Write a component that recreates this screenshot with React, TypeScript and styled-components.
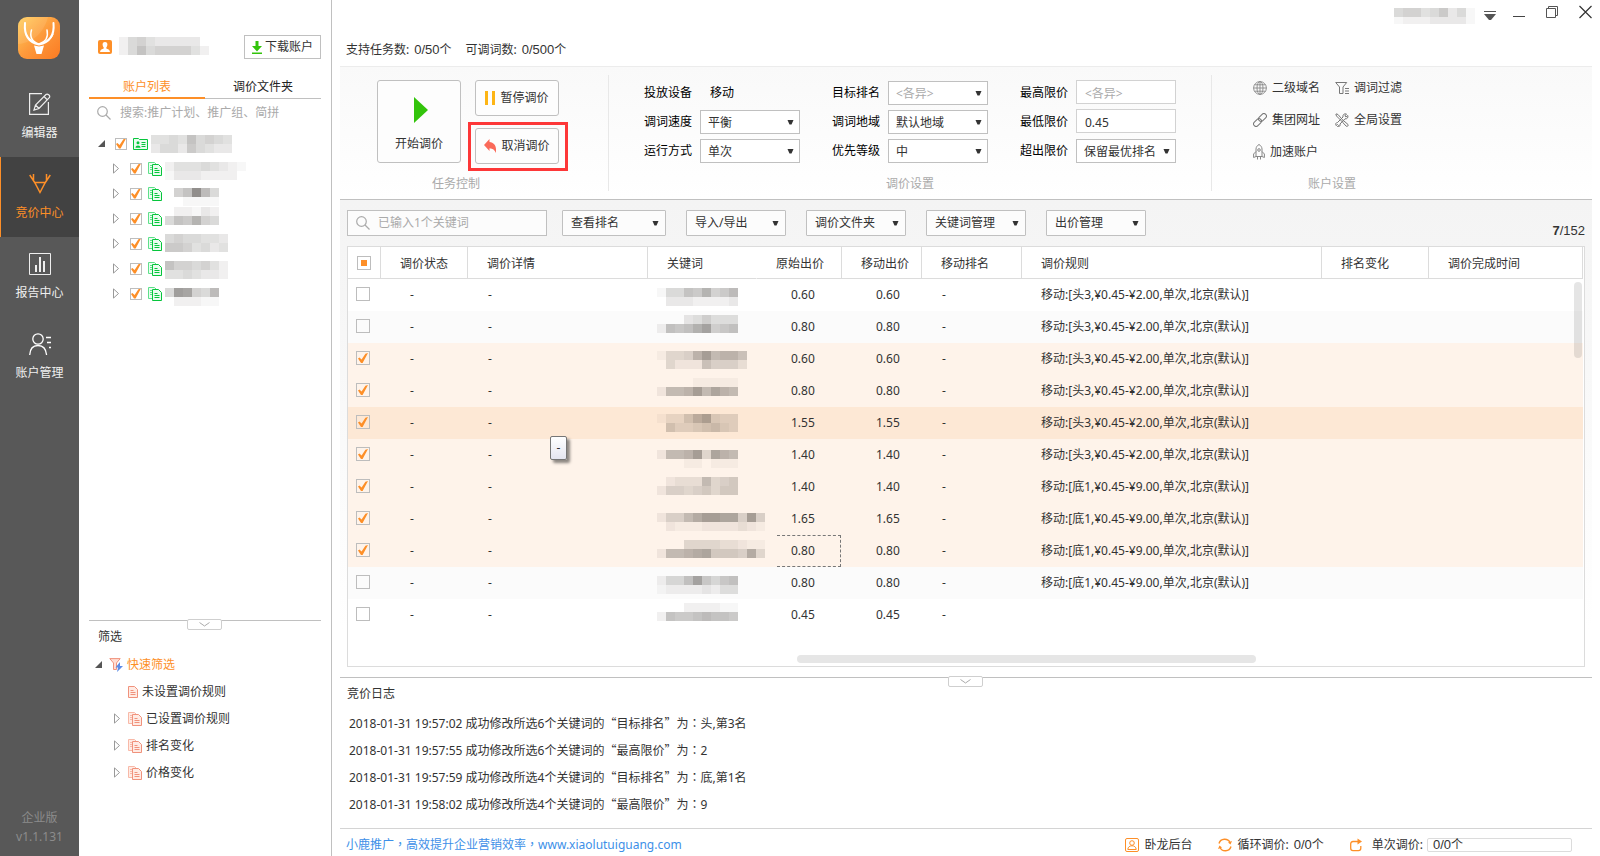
import React, { useEffect, useRef } from 'react';
import styled, { createGlobalStyle, css } from 'styled-components';

const orange = '#fd8f28';
const line = '#c0c0c0';
const softLine = '#dcdcdc';
const green = '#06c53c';

const GlobalStyle = createGlobalStyle`
  * { box-sizing: border-box; }
  body {
    margin: 0;
    background: #fff;
    color: #333;
    font: 12px/16px "Noto Sans", "Noto Sans CJK SC", sans-serif;
  }
  button, input, select { font: inherit; color: inherit; margin: 0; }
  button { background: none; border: 0; padding: 0; cursor: pointer; }
  a { color: inherit; text-decoration: none; }
  svg { display: block; flex: none; }
  ul { list-style: none; margin: 0; padding: 0; }
`;

/* ---------- shared pieces ---------- */

const Digits = styled.span`
  font-family: "Liberation Sans", sans-serif;
  font-size: 13px;
`;

const Amount = styled(Digits)`
  margin-left: 5px;
`;

const WideText = styled.span`
  font-family: "Noto Sans CJK TC", sans-serif;
  line-height: 0;
`;

/* Full-width punctuation, centred in its square. */
const Wide = ({ children }: { children: string }) => <WideText lang="zh-TW">{children}</WideText>;

const CheckInput = styled.input<{ $size: number }>`
  appearance: none;
  flex: none;
  width: ${(p) => p.$size}px;
  height: ${(p) => p.$size}px;
  border: 1px solid #bdbdbd;
  background: transparent;
  display: grid;
  place-items: center;
  &:checked::after {
    content: '';
    width: 10px;
    height: 10px;
    background: ${orange};
    clip-path: polygon(0 56%, 14% 46%, 36% 64%, 74% 8%, 100% 0, 46% 100%, 30% 100%);
  }
  &:indeterminate::after {
    content: '';
    width: 6px;
    height: 6px;
    background: ${orange};
    clip-path: none;
  }
`;

function MixedCheck({ label }: { label: string }) {
  const ref = useRef<HTMLInputElement>(null);
  useEffect(() => {
    if (ref.current) ref.current.indeterminate = true;
  }, []);
  return <CheckInput ref={ref} type="checkbox" $size={14} aria-label={label} />;
}

/* Pixelated privacy mask; each digit is the darkness of one 9px tile. */
function Mosaic({ tiles, top = 0, height }: { tiles: string[]; top?: number; height: number }) {
  const columns = Math.max(...tiles.map((t) => t.length));
  return (
    <svg width={columns * 9} height={height} shapeRendering="crispEdges" aria-hidden="true">
      {tiles.map((row, y) =>
        row.split('').map((c, x) => (
          <rect
            key={`${x}-${y}`}
            x={x * 9}
            y={top + y * 9}
            width={9}
            height={9}
            fill="#0a0500"
            opacity={parseInt(c, 16) * 0.03}
          />
        )),
      )}
    </svg>
  );
}

const Caret = () => (
  <svg width="7" height="5" viewBox="0 0 7 5">
    <path d="M0.5 0h6L4.5 4.500h-2z" fill="#333" />
  </svg>
);

const SearchIcon = () => (
  <svg width="14" height="14" viewBox="0 0 14 14" fill="none" stroke="#aaa" strokeWidth="1.2">
    <circle cx="5.500" cy="5.500" r="4.800" />
    <path d="M9 9l4.500 4.500" />
  </svg>
);

const Closed = () => (
  <svg width="7" height="11" viewBox="0 0 7 11" fill="none" stroke="#999">
    <path d="M.5.900v9.200l5-4.600z" />
  </svg>
);

const Opened = () => (
  <svg width="7" height="7" viewBox="0 0 7 7">
    <path d="M7 0v7H0z" fill="#555" />
  </svg>
);

const Pages = ({ color, back, fill }: { color: string; back: string; fill: string }) => (
  <svg width="14" height="14" viewBox="0 0 14 14" fill="none">
    <path d="M4 11.500H.5V.5h6l2 2" stroke={back} fill={fill} />
    <path d="M2 3.500h2M2 5.500h2M2 7.500h2" stroke={back} />
    <path d="M4.500 2.500h6l3 3v8h-9z" stroke={color} fill={fill} />
    <path d="M6.500 6.500h3M6.500 8.500h5M6.500 10.500h5" stroke={color} />
  </svg>
);

const Page = () => (
  <svg width="10" height="12" viewBox="0 0 10 12" fill="none" stroke="#f0927c">
    <path d="M.5.5h6l3 3v8h-9z" fill="#ffebe4" />
    <path d="M2.500 4.500h3M2.500 6.500h5M2.500 8.500h5" />
  </svg>
);

/* ---------- navigation rail ---------- */

const Shell = styled.div`
  display: flex;
  min-height: 100vh;
  padding-right: 8px;
`;

const Rail = styled.nav`
  flex: none;
  width: 79px;
  display: flex;
  flex-direction: column;
  background: #585858;
`;

const Logo = styled.div`
  height: 77px;
  padding: 17px 18px;
`;

const RailItem = styled.a<{ $active?: boolean }>`
  height: 80px;
  padding-top: 16px;
  display: flex;
  flex-direction: column;
  align-items: center;
  gap: 10px;
  color: ${(p) => (p.$active ? orange : '#f0f0f0')};
  ${(p) =>
    p.$active &&
    css`
      background: #424242;
      box-shadow: inset 1px 0 ${orange};
    `}
`;

const Edition = styled.div`
  margin-top: auto;
  padding-bottom: 10px;
  text-align: center;
  line-height: 19px;
  color: #8c8c8c;
`;

const LogoMark = () => (
  <svg width="42" height="42" viewBox="0 0 42 42" fill="none">
    <defs>
      <linearGradient id="logo" x1="0" y1="0" x2="1" y2="1">
        <stop offset="0" stopColor="#ffcf5c" />
        <stop offset=".5" stopColor="#fd9a3c" />
        <stop offset="1" stopColor="#fb7a22" />
      </linearGradient>
    </defs>
    <rect width="42" height="42" rx="9" fill="url(#logo)" />
    <path d="M0 27C14 26 26 16 30 0H9a9 9 0 0 0-9 9z" fill="#fff" opacity=".1" />
    <path d="M16 28.500l5 1 5-1-2.500 8.500h-5z" fill="#fff" />
    <g stroke="#fff" strokeLinecap="round">
      <path d="M7 6c-1 11 2 19 14 21.500C33 25 36.500 17 35.500 6" strokeWidth="2" />
      <path d="M13.500 13c-2 7 1 12 7.500 14 6.500-2 9.500-7 8-14" strokeWidth="1.500" />
      <path d="M8 17c1 3 3 5 6 7M35 17c-1 3-3 5-6 7" strokeWidth="1.200" />
    </g>
  </svg>
);

const EditIcon = () => (
  <svg width="22" height="22" viewBox="0 0 22 22" fill="none" stroke="#eee" strokeWidth="1.200">
    <path d="M13 .6H.6v20.800h18.800V9" />
    <path d="M5 17l1.500-5L17 1.500c1.500-1.200 4.500 1 3.500 3L10 15.500zM15 3.500l3.500 3.500M6.500 12l3.500 3.500" />
  </svg>
);

const DeerIcon = () => (
  <svg width="22" height="22" viewBox="0 0 22 22" fill="none" stroke={orange} strokeWidth="1.500">
    <path d="M.7 2l5 7.500L11 19.500l5.300-10 5-7.500M5 9.500h12M4.500 1v6M17.500 1v6" />
  </svg>
);

const ReportIcon = () => (
  <svg width="22" height="22" viewBox="0 0 22 22" fill="none" stroke="#eee">
    <path d="M.5.5h21v21H.5z" />
    <path d="M7 12v7M11 4v15M15 8v11" strokeWidth="2" />
  </svg>
);

const UserIcon = () => (
  <svg width="22" height="22" viewBox="0 0 22 22" fill="none" stroke="#fff" strokeWidth="1.300">
    <circle cx="9" cy="6" r="5.200" />
    <path d="M.7 22c.3-6.500 3.500-9.500 8.300-9.500s8 3 8.600 9.500M17 4.500h5M18 9.500h4M20 14.500h2" />
  </svg>
);

/* ---------- side panel ---------- */

const Side = styled.aside`
  flex: none;
  width: 253px;
  padding: 35px 10px 0;
  border-right: 1px solid ${line};
  display: flex;
  flex-direction: column;
`;

const Account = styled.div`
  display: flex;
  align-items: center;
  gap: 7px;
  padding-left: 9px;
`;

const Download = styled.button`
  margin-left: auto;
  width: 77px;
  height: 24px;
  border: 1px solid ${line};
  display: flex;
  align-items: center;
  justify-content: center;
  gap: 3px;
`;

const Tabs = styled.div`
  display: flex;
  align-items: flex-end;
  margin-top: 15px;
`;

const Tab = styled.button<{ $active?: boolean }>`
  flex: 1;
  height: 25px;
  color: ${(p) => (p.$active ? orange : '#222')};
  box-shadow: inset 0 ${(p) => (p.$active ? `-2px ${orange}` : `-1px ${line}`)};
`;

const SideSearch = styled.label`
  display: flex;
  align-items: center;
  gap: 9px;
  height: 28px;
  padding-left: 8px;
`;

const BareInput = styled.input`
  flex: 1;
  min-width: 0;
  border: 0;
  padding: 0;
  outline: 0;
  background: transparent;
  &::placeholder { color: #aaa; opacity: 1; }
`;

const Tree = styled.ul`
  margin-top: 4px;
`;

const Node = styled.li<{ $child?: boolean }>`
  display: flex;
  align-items: center;
  gap: 3px;
  height: 25px;
  padding-left: ${(p) => (p.$child ? 24 : 9)}px;
`;

const NodeCheck = styled.div`
  margin: 0 3px 0 7px;
`;

const Filters = styled.section`
  position: relative;
  margin-top: auto;
  padding-bottom: 70px;
  border-top: 1px solid ${line};
`;

const PanelTitle = styled.h2<{ $indent: number }>`
  margin: 0;
  height: 30px;
  padding-left: ${(p) => p.$indent}px;
  font-size: 12px;
  font-weight: 400;
  line-height: 32px;
`;

const Handle = styled.button`
  position: absolute;
  top: -2px;
  left: 50%;
  width: 35px;
  height: 11px;
  margin-left: -18px;
  border: 1px solid #cfcfcf;
  border-radius: 2px;
  background: #fff;
  display: grid;
  place-items: center;
`;

const HandleMark = () => (
  <svg width="11" height="5" viewBox="0 0 11 5" fill="none" stroke="#aaa">
    <path d="M.5.5l5 3.500 5-3.500" />
  </svg>
);

const FilterRow = styled.li<{ $level: number }>`
  display: flex;
  align-items: center;
  height: 27px;
  padding-left: ${(p) => [6, 25, 39][p.$level]}px;
  gap: 7px;
`;

const FilterLink = styled.a<{ $on?: boolean }>`
  display: flex;
  align-items: center;
  gap: 4px;
  color: ${(p) => (p.$on ? orange : '#333')};
`;

const accounts = [
  { tiles: ['445485654', '355375433'], top: 4 },
  { tiles: ['244454321', '133322220'], top: 6 },
  { tiles: ['068f95', '001111'], top: 7 },
  { tiles: ['022132', '587a65'], top: 1 },
  { tiles: ['5655443', '7764534'], top: 3 },
  { tiles: ['8665642', '4454332'], top: 5 },
  { tiles: ['5dc659', '022211'], top: 7 },
];

/* ---------- main column ---------- */

const Main = styled.main`
  flex: 1;
  min-width: 0;
  padding-left: 8px;
  display: flex;
  flex-direction: column;
`;

const TitleBar = styled.header`
  height: 32px;
  display: flex;
  justify-content: flex-end;
  gap: 21px;
`;

const UserMenu = styled.button`
  display: flex;
  gap: 9px;
  height: 26px;
  margin-right: -4px;
`;

const WindowButton = styled.button`
  height: 24px;
`;

const Stats = styled.div`
  display: flex;
  gap: 14px;
  padding-left: 6px;
  line-height: 35px;
  height: 34px;
`;

const Ribbon = styled.section`
  display: flex;
  padding: 8px 0;
  border-top: 1px solid #ececec;
  border-bottom: 1px solid ${line};
  background: linear-gradient(#f9f9f9, #fff);
`;

const Group = styled.div<{ $width: number; $pad: number; $last?: boolean }>`
  flex: none;
  width: ${(p) => p.$width}px;
  height: 116px;
  padding: 5px 0 0 ${(p) => p.$pad}px;
  border-right: ${(p) => (p.$last ? 0 : 1)}px solid #e8e8e8;
  display: flex;
  flex-direction: column;
  justify-content: space-between;
`;

const GroupName = styled.div<{ $span: number }>`
  width: ${(p) => p.$span}px;
  text-align: center;
  line-height: 15px;
  color: #aaa;
`;

const Actions = styled.div`
  display: flex;
  gap: 14px;
`;

const ActionColumn = styled.div`
  display: flex;
  flex-direction: column;
  gap: 12px;
`;

const ActionButton = styled.button<{ $tall?: boolean }>`
  width: 84px;
  height: ${(p) => (p.$tall ? 83 : 36)}px;
  padding-top: ${(p) => (p.$tall ? 6 : 0)}px;
  border: 1px solid ${line};
  border-radius: 3px;
  background: #fdfdfd;
  display: flex;
  flex-direction: ${(p) => (p.$tall ? 'column' : 'row')};
  align-items: center;
  justify-content: center;
  gap: ${(p) => (p.$tall ? 13 : 5)}px;
`;

const Marked = styled.div`
  position: relative;
  &::after {
    content: '';
    position: absolute;
    inset: -6px -9px -7px -7px;
    border: 3px solid #fd3738;
    pointer-events: none;
  }
`;

const Settings = styled.div`
  display: grid;
  grid-template-columns: repeat(3, 156px);
  column-gap: 32px;
  row-gap: 5px;
`;

const Field = styled.label`
  display: grid;
  grid-template-columns: 48px 100px;
  column-gap: 8px;
  height: 24px;
  line-height: 26px;
  color: #000;
`;

const PlainValue = styled.span`
  padding-left: 10px;
`;

const SelectBox = styled.span`
  display: grid;
  align-items: center;
  > * { grid-area: 1 / 1; }
  > svg { justify-self: end; margin-right: 6px; pointer-events: none; }
`;

const Select = styled.select<{ $muted?: boolean }>`
  appearance: none;
  width: 100%;
  height: 24px;
  padding: 2px 14px 0 7px;
  border: 1px solid ${line};
  border-radius: 0;
  background: #fff;
  line-height: 16px;
  color: ${(p) => (p.$muted ? '#aaa' : '#333')};
`;

const TextInput = styled.input`
  width: 100%;
  height: 24px;
  padding: 2px 8px 0;
  border: 1px solid #d2d2d2;
  background: #fff;
  line-height: 16px;
  color: #333;
  &::placeholder { color: #aaa; opacity: 1; }
`;

const Links = styled.div`
  display: grid;
  grid-template-columns: 82px 82px;
  grid-auto-rows: 32px;
  margin-top: -8px;
`;

const IconLink = styled.a`
  display: flex;
  align-items: center;
  gap: 5px;
`;

const Work = styled.section`
  flex: 1;
  display: flex;
  flex-direction: column;
  gap: 10px;
  padding: 10px 7px;
  background: linear-gradient(#f4f4f4, #f6f6f6 20%, #fff 90%);
`;

const Toolbar = styled.div`
  display: flex;
  align-items: center;
  gap: 20px;
`;

const KeywordSearch = styled.label`
  width: 200px;
  height: 26px;
  margin-right: -5px;
  padding: 0 8px;
  border: 1px solid ${line};
  background: #fcfcfc;
  display: flex;
  align-items: center;
  gap: 8px;
`;

const MenuButton = styled.button<{ $width: number }>`
  width: ${(p) => p.$width}px;
  height: 26px;
  padding: 0 6px 0 8px;
  border: 1px solid ${line};
  border-radius: 1px;
  background: #fcfcfc;
  display: flex;
  align-items: center;
  justify-content: space-between;
`;

const Count = styled(Digits)`
  margin-left: auto;
  align-self: flex-end;
  line-height: 10px;
`;

const TableBox = styled.div`
  position: relative;
  flex: 1;
  padding: 0 1px 35px 0;
  border: 1px solid ${softLine};
  background: #fff;
`;

const Table = styled.table`
  width: 100%;
  table-layout: fixed;
  border-collapse: separate;
  border-spacing: 0;
`;

const Th = styled.th<{ $open?: boolean }>`
  height: 32px;
  padding: 2px 0 0 19px;
  text-align: left;
  font-weight: 400;
  white-space: nowrap;
  border-right: 1px solid ${(p) => (p.$open ? 'transparent' : softLine)};
  border-bottom: 1px solid ${softLine};
`;

const CheckTh = styled(Th)`
  padding: 0 0 0 9px;
`;

type Tone = 'plain' | 'alt' | 'picked' | 'current';
const tones: Record<Tone, string> = { plain: '#fff', alt: '#fbfbfb', picked: '#fef3ea', current: '#fde8d5' };

const Tr = styled.tr<{ $tone: Tone }>`
  background: ${(p) => tones[p.$tone]};
`;

const Td = styled.td<{ $pad: number; $focus?: boolean }>`
  height: 32px;
  padding: 0 0 0 ${(p) => p.$pad}px;
  white-space: nowrap;
  ${(p) =>
    p.$focus &&
    css`
      position: relative;
      &::after {
        content: '';
        position: absolute;
        inset: 0 1px 0 20px;
        border: 1px dashed #777;
        border-left: 0;
      }
    `}
`;

const CheckTd = styled(Td)`
  padding-bottom: 2px;
`;

const ScrollY = styled.div`
  position: absolute;
  top: 35px;
  right: 2px;
  width: 8px;
  height: 76px;
  border-radius: 4px;
  background: rgba(0, 0, 0, 0.1);
`;

const ScrollX = styled.div`
  position: absolute;
  bottom: 3px;
  left: 449px;
  width: 459px;
  height: 8px;
  border-radius: 4px;
  background: #e6e6e6;
`;

const Tip = styled.div`
  position: absolute;
  left: 202px;
  top: 189px;
  width: 17px;
  height: 24px;
  border: 1px solid #767676;
  border-radius: 2px;
  background: linear-gradient(#fff, #e4e5f0);
  box-shadow: 3px 3px 3px rgba(0, 0, 0, 0.45);
  text-align: center;
  line-height: 21px;
`;

const Log = styled.section`
  position: relative;
  padding-bottom: 10px;
  border-top: 1px solid ${line};
`;

const LogList = styled.ul`
  padding: 2px 0 0 9px;
  line-height: 27px;
`;

const Footer = styled.footer`
  display: flex;
  align-items: center;
  height: 28px;
  padding: 5px 20px 0 6px;
  border-top: 1px solid #d4d4d4;
`;

const Site = styled.a`
  margin-right: auto;
  color: #3d8fe8;
`;

const FootItem = styled.div<{ $gap: number; $after: number }>`
  display: flex;
  align-items: center;
  gap: ${(p) => p.$gap}px;
  margin-right: ${(p) => p.$after}px;
  white-space: pre;
`;

const Progress = styled.div`
  width: 145px;
  height: 14px;
  padding-left: 5px;
  border: 1px solid ${softLine};
  border-radius: 2px;
  line-height: 12px;
`;

/* ---------- data ---------- */

const head = '移动:[头3,¥0.45-¥2.00,单次,北京(默认)]';
const tail = '移动:[底1,¥0.45-¥9.00,单次,北京(默认)]';

const rows: { tone: Tone; bid: string; rule: string; top: number; tiles: string[]; focus?: boolean }[] = [
  { tone: 'plain', bid: '0.60', rule: head, top: 9, tiles: ['15587a679', '033322223'] },
  { tone: 'alt', bid: '0.80', rule: head, top: 4, tiles: ['000346444', '2878ac678'] },
  { tone: 'picked', bid: '0.60', rule: head, top: 8, tiles: ['14459c8997', '0422275553'] },
  { tone: 'picked', bid: '0.80', rule: head, top: 3, tiles: ['000011111', '2889c8b98'] },
  { tone: 'current', bid: '1.55', rule: head, top: 7, tiles: ['13369b544', '064456754'] },
  { tone: 'picked', bid: '1.40', rule: head, top: 11, tiles: ['2889c4b98', '000110111'] },
  { tone: 'picked', bid: '1.40', rule: tail, top: 6, tiles: ['023338456', '255456466'] },
  { tone: 'picked', bid: '1.65', rule: tail, top: 10, tiles: ['2558accbb5c5', '021112222321'] },
  { tone: 'picked', bid: '0.80', rule: tail, top: 5, tiles: ['000444433211', '2889ab6665a4'], focus: true },
  { tone: 'alt', bid: '0.80', rule: tail, top: 9, tiles: ['2558c7578', '122223244'] },
  { tone: 'plain', bid: '0.45', rule: '', top: 4, tiles: ['000222211', '287789887'] },
];

const columns = [
  { name: '调价状态', width: 87 },
  { name: '调价详情', width: 180 },
  { name: '关键词', width: 109, open: true },
  { name: '原始出价', width: 85 },
  { name: '移动出价', width: 80 },
  { name: '移动排名', width: 100 },
  { name: '调价规则', width: 300 },
  { name: '排名变化', width: 107 },
  { name: '调价完成时间' },
];

const logs = [
  { time: '19:57:02', n: 6, what: '目标排名', value: '头,第3名' },
  { time: '19:57:55', n: 6, what: '最高限价', value: '2' },
  { time: '19:57:59', n: 4, what: '目标排名', value: '底,第1名' },
  { time: '19:58:02', n: 4, what: '最高限价', value: '9' },
];

const Picker = ({ label, value, muted }: { label: string; value: string; muted?: boolean }) => (
  <Field>
    {label}
    <SelectBox>
      <Select $muted={muted} defaultValue={value}>
        <option>{value}</option>
      </Select>
      <Caret />
    </SelectBox>
  </Field>
);

export default function App() {
  return (
    <Shell lang="zh-CN">
      <GlobalStyle />
      <Rail>
        <Logo>
          <LogoMark />
        </Logo>
        <RailItem href="#editor">
          <EditIcon />
          编辑器
        </RailItem>
        <RailItem href="#bidding" $active>
          <DeerIcon />
          竞价中心
        </RailItem>
        <RailItem href="#report">
          <ReportIcon />
          报告中心
        </RailItem>
        <RailItem href="#account">
          <UserIcon />
          账户管理
        </RailItem>
        <Edition>
          企业版
          <br />
          v1.1.131
        </Edition>
      </Rail>

      <Side>
        <Account>
          <svg width="14" height="14" viewBox="0 0 14 14">
            <rect width="14" height="14" rx="2" fill={orange} />
            <path d="M7 2c1.700 0 2.600 1.200 2.400 2.800C9.300 6 8.700 7 8.300 7.600v1c1.500.5 3.500.9 3.700 3.400H2c.2-2.500 2.200-2.900 3.700-3.400v-1C5.300 7 4.700 6 4.600 4.800 4.400 3.200 5.300 2 7 2z" fill="#fff" />
          </svg>
          <Mosaic tiles={['2564333330', '2585666642']} height={20} />
          <Download>
            <svg width="10" height="13" viewBox="0 0 10 13" fill="#33c40b">
              <path d="M3.500 0h3v5H10L5 10.500 0 5h3.500zM0 11.500h10V13H0z" />
            </svg>
            下载账户
          </Download>
        </Account>
        <Tabs>
          <Tab $active>账户列表</Tab>
          <Tab>调价文件夹</Tab>
        </Tabs>
        <SideSearch>
          <SearchIcon />
          <BareInput aria-label="搜索" placeholder="搜索:推广计划、推广组、简拼" />
        </SideSearch>
        <Tree>
          {accounts.map((a, i) => (
            <Node key={i} $child={i > 0}>
              {i > 0 ? <Closed /> : <Opened />}
              <NodeCheck>
                <CheckInput type="checkbox" $size={12} defaultChecked aria-label={`账户 ${i + 1}`} />
              </NodeCheck>
              {i > 0 ? (
                <Pages color={green} back="#5fe08a" fill="#eafcf0" />
              ) : (
                <svg width="15" height="12" viewBox="0 0 15 12" fill="none" stroke={green}>
                  <path d="M.5.500h5l1 1h8v10H.5z" fill="#eafcf0" />
                  <path d="M8.500 4.500h4M8.500 6.500h4M8.500 8.500h4" />
                  <path d="M5 3.200a1.500 1.500 0 0 1 0 3 1.500 1.500 0 0 1 0-3zM2.500 9.800c0-3 5-3 5 0z" fill={green} stroke="none" />
                </svg>
              )}
              <Mosaic tiles={a.tiles} top={a.top} height={25} />
            </Node>
          ))}
        </Tree>

        <Filters>
          <Handle aria-label="折叠筛选">
            <HandleMark />
          </Handle>
          <PanelTitle $indent={9}>筛选</PanelTitle>
          <ul>
            <FilterRow $level={0}>
              <Opened />
              <FilterLink href="#quick" $on>
                <svg width="14" height="14" viewBox="0 0 14 14" fill="none">
                  <path d="M.8.600h10.400L7.500 5v6.500h-3V5z" fill="#ffddd3" stroke="#f0927c" />
                  <path d="M11 4L6.500 9.500H9L8 14l6-6h-3z" fill="#5b8be6" />
                </svg>
                快速筛选
              </FilterLink>
            </FilterRow>
            <FilterRow $level={2}>
              <FilterLink href="#unset">
                <Page />
                未设置调价规则
              </FilterLink>
            </FilterRow>
            {['已设置调价规则', '排名变化', '价格变化'].map((name) => (
              <FilterRow key={name} $level={1}>
                <Closed />
                <FilterLink href="#filter">
                  <Pages color="#f0927c" back="#f8b9a8" fill="#ffebe4" />
                  {name}
                </FilterLink>
              </FilterRow>
            ))}
          </ul>
        </Filters>
      </Side>

      <Main>
        <TitleBar>
          <UserMenu aria-label="用户菜单">
            <Mosaic tiles={['0566457351', '0122233331']} top={8} height={24} />
            <svg width="12" height="24" viewBox="0 0 12 24">
              <path d="M0 11h12v1H0zM0 14h12l-5 6H5z" fill="#555" />
            </svg>
          </UserMenu>
          <WindowButton aria-label="最小化">
            <svg width="12" height="24">
              <path d="M0 16h12v1H0z" fill="#444" />
            </svg>
          </WindowButton>
          <WindowButton aria-label="还原">
            <svg width="12" height="24" fill="none" stroke="#555">
              <path d="M.5 8.500h9v9h-9zM2.500 8.500v-2h9v9h-2" />
            </svg>
          </WindowButton>
          <WindowButton aria-label="关闭">
            <svg width="13" height="24" fill="none" stroke="#333" strokeWidth="1.200">
              <path d="M.5 6l12 12M12.500 6l-12 12" />
            </svg>
          </WindowButton>
        </TitleBar>
        <Stats>
          <span>
            支持任务数:<Amount>0/50</Amount>个
          </span>
          <span>
            可调词数:<Amount>0/500</Amount>个
          </span>
        </Stats>

        <Ribbon>
          <Group $width={269} $pad={37}>
            <Actions>
              <ActionButton $tall>
                <svg width="18" height="26" viewBox="0 0 18 26">
                  <path d="M4 0l14 13L4 26z" fill="#33c40b" />
                </svg>
                开始调价
              </ActionButton>
              <ActionColumn>
                <ActionButton>
                  <svg width="10" height="14">
                    <path d="M0 0h3v14H0zM7 0h3v14H7z" fill="#fdb515" />
                  </svg>
                  暂停调价
                </ActionButton>
                <Marked>
                  <ActionButton>
                    <svg width="12" height="14" viewBox="0 0 12 14">
                      <path d="M5.500 0v3c4 .3 6.500 3.500 6.500 7v4c-1.500-3-3-4.500-6.500-4.700V12L0 6z" fill="#fa6a5a" />
                    </svg>
                    取消调价
                  </ActionButton>
                </Marked>
              </ActionColumn>
            </Actions>
            <GroupName $span={158}>任务控制</GroupName>
          </Group>
          <Group $width={603} $pad={35}>
            <Settings>
              <Field as="div">
                <span>投放设备</span>
                <PlainValue>移动</PlainValue>
              </Field>
              <Picker label="目标排名" value="<各异>" muted />
              <Field>
                最高限价
                <TextInput placeholder="<各异>" />
              </Field>
              <Picker label="调词速度" value="平衡" />
              <Picker label="调词地域" value="默认地域" />
              <Field>
                最低限价
                <TextInput defaultValue="0.45" />
              </Field>
              <Picker label="运行方式" value="单次" />
              <Picker label="优先等级" value="中" />
              <Picker label="超出限价" value="保留最优排名" />
            </Settings>
            <GroupName $span={532}>调价设置</GroupName>
          </Group>
          <Group $width={240} $pad={41} $last>
            <Links>
              <IconLink href="#domain">
                <svg width="14" height="14" viewBox="0 0 14 14" fill="none" stroke="#888" strokeWidth=".9">
                  <circle cx="7" cy="7" r="6.400" />
                  <ellipse cx="7" cy="7" rx="3" ry="6.400" />
                  <path d="M.6 7h12.800M7 .6v12.800M1.500 3.800h11M1.500 10.200h11" />
                </svg>
                二级域名
              </IconLink>
              <IconLink href="#words">
                <svg width="14" height="14" viewBox="0 0 14 14" fill="none" stroke="#777">
                  <path d="M.7 1.500h11L8 6v6.500H4.500V6zM10 7.500h4M10 10h4M10 12.500h4" />
                </svg>
                调词过滤
              </IconLink>
              <IconLink href="#group">
                <svg width="14" height="14" viewBox="0 0 14 14" fill="none" stroke="#777">
                  <g transform="rotate(-45 7 7)">
                    <rect x="-1" y="4.500" width="9" height="5" rx="2.500" />
                    <rect x="6" y="4.500" width="9" height="5" rx="2.500" />
                  </g>
                </svg>
                集团网址
              </IconLink>
              <IconLink href="#global">
                <svg width="14" height="14" viewBox="0 0 14 14" fill="none" stroke="#777">
                  <path d="M1 .8l2 .7 6 7M.8 1l.7 2L8 9.500M9 8l4 3.500c.8 1-.8 2.500-1.800 1.700L7.800 9.500M12.800 2.500L11 4 9.800 3 11.500 1C9 .2 7.500 2 8 4L2.500 9.500C1 9.500.2 11 1 12.500l1.500-1 1 1L2.500 14c2 0 3-1.500 2.500-3L10 5.800c2 .5 3.500-1.300 2.800-3.300z" />
                </svg>
                全局设置
              </IconLink>
              <IconLink href="#boost">
                <svg width="12" height="16" viewBox="0 0 12 16" fill="none" stroke="#888">
                  <path d="M3 12.500V5c0-2 1.500-3.700 3-4.500C7.500 1.300 9 3 9 5v7.500zM3 7.500L.6 10v3.500L3 12.500M9 7.500l2.400 2.500v3.500L9 12.500M4.500 13v2.500M7.500 13v2.500" />
                  <circle cx="6" cy="6" r="1.300" />
                </svg>
                加速账户
              </IconLink>
            </Links>
            <GroupName $span={158}>账户设置</GroupName>
          </Group>
        </Ribbon>

        <Work>
          <Toolbar>
            <KeywordSearch>
              <SearchIcon />
              <BareInput aria-label="关键词" placeholder="已输入1个关键词" />
            </KeywordSearch>
            <MenuButton $width={104}>
              查看排名
              <Caret />
            </MenuButton>
            {['导入/导出', '调价文件夹', '关键词管理', '出价管理'].map((name) => (
              <MenuButton key={name} $width={100}>
                {name}
                <Caret />
              </MenuButton>
            ))}
            <Count>
              <b>7</b>/152
            </Count>
          </Toolbar>
          <TableBox>
            <Table>
              <colgroup>
                <col style={{ width: 33 }} />
                {columns.map((c) => (
                  <col key={c.name} style={{ width: c.width }} />
                ))}
              </colgroup>
              <thead>
                <tr>
                  <CheckTh>
                    <MixedCheck label="全选" />
                  </CheckTh>
                  {columns.map((c) => (
                    <Th key={c.name} $open={c.open}>
                      {c.name}
                    </Th>
                  ))}
                </tr>
              </thead>
              <tbody>
                {rows.map((r, i) => (
                  <Tr key={i} $tone={r.tone}>
                    <CheckTd $pad={8}>
                      <CheckInput
                        type="checkbox"
                        $size={14}
                        defaultChecked={r.tone === 'picked' || r.tone === 'current'}
                        aria-label={`第${i + 1}行`}
                      />
                    </CheckTd>
                    <Td $pad={29}>-</Td>
                    <Td $pad={20}>-</Td>
                    <Td $pad={9}>
                      <Mosaic tiles={r.tiles} top={r.top} height={32} />
                    </Td>
                    <Td $pad={34} $focus={r.focus}>
                      {r.bid}
                    </Td>
                    <Td $pad={34}>{r.bid}</Td>
                    <Td $pad={20}>-</Td>
                    <Td $pad={19}>{r.rule}</Td>
                    <Td $pad={19} />
                    <Td $pad={19} />
                  </Tr>
                ))}
              </tbody>
            </Table>
            <ScrollY />
            <ScrollX />
            <Tip role="tooltip">-</Tip>
          </TableBox>
        </Work>

        <Log>
          <Handle aria-label="折叠日志">
            <HandleMark />
          </Handle>
          <PanelTitle $indent={7}>竞价日志</PanelTitle>
          <LogList>
            {logs.map((l) => (
              <li key={l.time}>
                2018-01-31 {l.time} 成功修改所选{l.n}个关键词的<Wide>“</Wide>
                {l.what}
                <Wide>”</Wide>为<Wide>：</Wide>
                {l.value}
              </li>
            ))}
          </LogList>
        </Log>

        <Footer>
          <Site href="#site">
            小鹿推广<Wide>，</Wide>高效提升企业营销效率<Wide>，</Wide>www.xiaolutuiguang.com
          </Site>
          <FootItem $gap={5} $after={26}>
            <svg width="14" height="14" viewBox="0 0 14 14" fill="none" stroke={orange}>
              <rect x=".5" y=".5" width="13" height="13" rx="1.500" />
              <circle cx="7" cy="5" r="2.300" />
              <path d="M2.800 11.500c0-5 8.400-5 8.400 0z" />
            </svg>
            卧龙后台
          </FootItem>
          <FootItem $gap={5} $after={26}>
            <svg width="14" height="14" viewBox="0 0 14 14" fill="none" stroke={orange} strokeWidth="1.400">
              <path d="M1 5.500C2.500 0 10 0 12 4.500M13 8.500C11.500 14 4 14 2 9.500" />
              <path d="M14 3l-1.500 3.500L10 4.500zM0 11l1.500-3.500L4 9.500z" fill={orange} stroke="none" />
            </svg>
            <span>
              循环调价:<Amount>0/0</Amount>个
            </span>
          </FootItem>
          <FootItem $gap={10} $after={4}>
            <svg width="12" height="14" viewBox="0 0 12 14" fill="none" stroke={orange} strokeWidth="1.300">
              <path d="M8 3.500H3c-1.500 0-2.300.8-2.300 2.300v4.500c0 1.500.8 2.300 2.300 2.300h5.500c1.500 0 2.300-.8 2.300-2.300V8" />
              <path d="M7.500.5L12 3.500l-4.500 3z" fill={orange} stroke="none" />
            </svg>
            单次调价:
          </FootItem>
          <Progress>
            <Digits>0/0</Digits>个
          </Progress>
        </Footer>
      </Main>
    </Shell>
  );
}
